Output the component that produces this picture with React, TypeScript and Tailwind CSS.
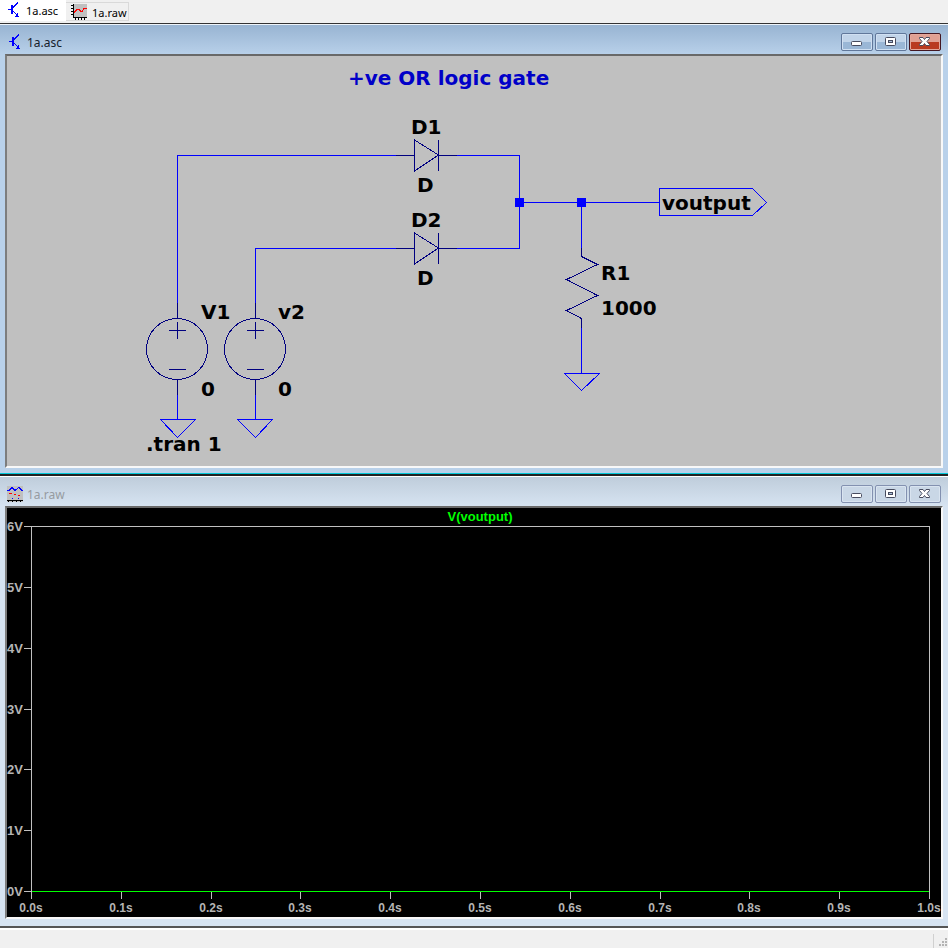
import type { ReactNode } from "react";

const TransistorIcon = () => (
  <svg width="16" height="16" viewBox="0 0 16 16" shapeRendering="crispEdges" fill="none" stroke="#0000ff" aria-hidden="true">
    <path d="M5 3h2v9h-2zM2 7h3v1h-3z" fill="#0000ff" stroke="none" />
    <path d="M7 5.500l5-5M7 9l6 6" strokeWidth="1.2" />
    <path d="M12 11v4h-3v-1h1v-1h1v-2z" fill="#0000ff" stroke="none" />
  </svg>
);

const PlotIcon = () => (
  <svg width="16" height="16" viewBox="0 0 16 16" shapeRendering="crispEdges" fill="none" aria-hidden="true">
    <path d="M2 0h14v14H2z" fill="#c0c0c0" />
    <path d="M2.500 0v14M2 13.500h14M0 1.500h3M0 4.500h3M0 7.500h3M0 10.500h3M4.500 13v3M7.500 13v3M10.500 13v3M13.500 13v3" stroke="#000" />
    <path d="M3 8.500l3-3h2l2 2h1l2-3h3" stroke="#f00" strokeWidth="1.300" />
  </svg>
);

const WaveIcon = () => (
  <svg width="16" height="16" viewBox="0 0 16 16" shapeRendering="crispEdges" fill="none" aria-hidden="true">
    <path d="M0 0h16v16H0z" fill="#c0c0c0" />
    <path d="M0 4.500h2l3-3 3 3 4-3 3 3h1" stroke="#00f" />
    <path d="M2 7.500h3M7 8.500h2M11 9.500h2" stroke="#f00" />
    <path d="M5 12.500h1M11 12.500h1" stroke="#00f" />
    <path d="M0 14.500h16M1.500 14v2M5.500 14v2M9.500 14v2M13.500 14v2" stroke="#000" />
  </svg>
);

const controls = [
  {
    name: "Minimize",
    glyph: <rect x="9.500" y="7.500" width="10" height="4" rx="1" fill="#fff" stroke="#474b5e" />,
  },
  {
    name: "Restore",
    glyph: (
      <g fill="#fff" stroke="#474b5e">
        <rect x="9.500" y="3.500" width="10" height="8" rx="1" />
        <rect x="12.500" y="6.500" width="4" height="2" fill="#a9bed8" />
      </g>
    ),
  },
  {
    name: "Close",
    glyph: (
      <path
        d="M9.500 3.500h3.500l1.500 2 1.500-2h3.500v1l-2.500 3 2.500 3v1h-3.500l-1.500-2-1.500 2h-3.500v-1l2.500-3-2.500-3z"
        fill="#fff"
        stroke="#474b5e"
      />
    ),
  },
];

function Window({ title, icon, active, children }: { title: string; icon: ReactNode; active: boolean; children: ReactNode }) {
  const frame = active
    ? "bg-[#b9d1ea] bg-linear-to-b from-[#98b4d2] to-[#b9d1ea] border-t-[#eef4fa] pb-[5px]"
    : "bg-[#d7e4f2] bg-linear-to-b from-[#bfcddb] to-[#d7e4f2] border-t-[#ffffff] pb-[7px]";
  const normal = active
    ? "border-[#60779a] bg-linear-to-b from-[#c1d4e9] from-50% to-[#9ab7d6] to-50% shadow-[inset_0_0_0_1px_#d0e0f2]"
    : "border-[#8391b0] bg-[#c9d7e6] shadow-[inset_0_0_0_1px_#d9e4f0]";
  const close = active
    ? "border-[#431621] bg-linear-to-b from-[#e0a093] from-50% to-[#b93a21] to-50% shadow-[inset_0_0_0_1px_#e3a79b]"
    : normal;
  return (
    <section aria-label={title} className={`border-t bg-size-[100%_30px] bg-no-repeat px-[5px] ${frame}`}>
      <header className="flex h-[29px] items-start gap-1 px-0.5 pt-2">
        <span className="pt-px">{icon}</span>
        <h2 className={`flex-1 pt-px text-[12px] leading-[18px] ${active ? "text-[#15202c]" : "text-[#969ba1]"}`}>{title}</h2>
        <div className="flex gap-0.5">
          {controls.map((c) => (
            <button key={c.name} type="button" aria-label={c.name} className={`h-[18px] w-8 rounded-xs border ${c.name === "Close" ? close : normal}`}>
              <svg width="30" height="16" viewBox="0 0 30 16" aria-hidden="true">
                {c.glyph}
              </svg>
            </button>
          ))}
        </div>
      </header>
      <div className="border-2 border-t-[#696969] border-r-[#f8f8f8] border-b-[#f8f8f8] border-l-[#7d7d7d]">
        {children}
      </div>
    </section>
  );
}

const labels = [
  { x: 411, y: 134, text: "D1" },
  { x: 417, y: 192, text: "D" },
  { x: 411, y: 227, text: "D2" },
  { x: 417, y: 285, text: "D" },
  { x: 201, y: 319, text: "V1" },
  { x: 201, y: 396, text: "0" },
  { x: 278, y: 319, text: "v2" },
  { x: 278, y: 396, text: "0" },
  { x: 601, y: 280, text: "R1" },
  { x: 601, y: 315, text: "1000" },
  { x: 662, y: 210, text: "voutput" },
  { x: 146, y: 451, text: ".tran 1" },
];

const Schematic = () => (
  <svg viewBox="7 56 934 410" className="block w-full bg-[#c0c0c0]" role="img" aria-label="OR gate schematic">
    <g fill="none" stroke="#0000ff" shapeRendering="crispEdges">
      <path d="M177.500 303V155.500H396M457 155.500H519.500V248.500H457M396 248.500H255.500V303M177.500 395V419M255.500 395V419" />
      <path d="M519 202.500H659M581.500 202V248M581.500 328V373" />
      <path d="M160.500 419.500h35l-18 18zM237.500 419.500h35l-17 18zM564.500 373.500h35l-18 17z" />
      <path d="M659.500 188.500h93l14 14-14 13h-93z" />
      <path d="M515 198h9v9h-9zM577 198h9v9h-9z" fill="#0000ff" stroke="none" />
    </g>
    <g fill="none" stroke="#000080" shapeRendering="crispEdges">
      {[155, 248].map((y) => (
        <path key={y} d={`M396 ${y}.5H414M438 ${y}.5H457M414.500 ${y - 15}v31l24-16zM438.500 ${y - 15}v31`} />
      ))}
      {[177, 255].map((x) => (
        <g key={x}>
          <circle cx={x} cy="349" r="30.500" />
          <path d={`M${x}.5 303v15M${x}.5 380v15M${x - 8} 330.500h17M${x}.5 322v17M${x - 8} 369.500h17`} />
        </g>
      ))}
      <path d="M581.500 248v8.500l16 8-31 15 31 16-31 15 15 8v9" />
    </g>
    <g className="font-['DejaVu_Sans',sans-serif] text-[20px] font-bold">
      <text x="348" y="85" fill="#0000c8">+ve OR logic gate</text>
      {labels.map((l) => (
        <text key={`${l.x}-${l.y}`} x={l.x} y={l.y}>{l.text}</text>
      ))}
    </g>
  </svg>
);

const xTicks = [31, 121, 211, 300, 390, 480, 570, 660, 749, 839, 929];
const yTicks = [526, 587, 648, 709, 769, 830, 891];

const Plot = () => (
  <svg viewBox="7 508 934 409" className="block w-full bg-black" role="img" aria-label="Plot of V(voutput)">
    <g fill="none" stroke="#c0c0c0" shapeRendering="crispEdges">
      <path d="M31.500 526.500h898v365h-898z" />
      {xTicks.map((x) => <path key={x} d={`M${x}.5 891v8`} />)}
      {yTicks.map((y) => <path key={y} d={`M24 ${y}.5h8`} />)}
      <path d="M32 891.500h897" stroke="#00ff00" />
    </g>
    <g className="font-['Liberation_Sans',Arial,sans-serif] text-[13px] font-bold" fill="#b4b4b4">
      {xTicks.map((x, i) => <text key={x} x={x} y="912" textAnchor="middle" className="text-[12px]">{`${(i / 10).toFixed(1)}s`}</text>)}
      {yTicks.map((y, i) => <text key={y} x="23" y={y + 5} textAnchor="end">{`${6 - i}V`}</text>)}
      <text x="480" y="521" textAnchor="middle" fill="#00ff00">V(voutput)</text>
    </g>
  </svg>
);

export default function App() {
  return (
    <div className="flex min-h-screen flex-col overflow-hidden bg-[#f0f0f0] font-['Noto_Sans',sans-serif]">
      <nav aria-label="Documents" className="flex h-[23px] items-start text-[11px] leading-4 text-black">
        <button type="button" className="flex h-[21px] w-[66px] items-start gap-1 bg-white pt-0.5 pl-[6px]">
          <TransistorIcon />
          <span className="pt-px">1a.asc</span>
        </button>
        <button type="button" className="mt-0.5 flex h-[19px] w-[63px] items-start gap-[5px] border border-l-0 border-[#d9d9d9] pt-px pl-[5px]">
          <PlotIcon />
          <span className="pt-px">1a.raw</span>
        </button>
      </nav>
      <main>
        <div className="border-t border-b border-t-[#333333] border-b-[#00c8d8]">
          <Window title="1a.asc" icon={<TransistorIcon />} active>
            <Schematic />
          </Window>
        </div>
        <div className="border-y-2 border-t-[#222222] border-b-[#555555]">
          <Window title="1a.raw" icon={<WaveIcon />} active={false}>
            <Plot />
          </Window>
        </div>
      </main>
      <footer className="flex flex-1 justify-end border-t-2 border-white pt-1">
        <div className="flex w-[15px] items-end justify-end border-l border-[#d0d0d0]">
          <svg width="10" height="10" viewBox="0 0 10 10" fill="#b4b4b4" aria-hidden="true">
            <path d="M7 0h2v2H7zM4 3h2v2H4zM7 3h2v2H7zM1 6h2v2H1zM4 6h2v2H4zM7 6h2v2H7z" />
          </svg>
        </div>
      </footer>
    </div>
  );
}
